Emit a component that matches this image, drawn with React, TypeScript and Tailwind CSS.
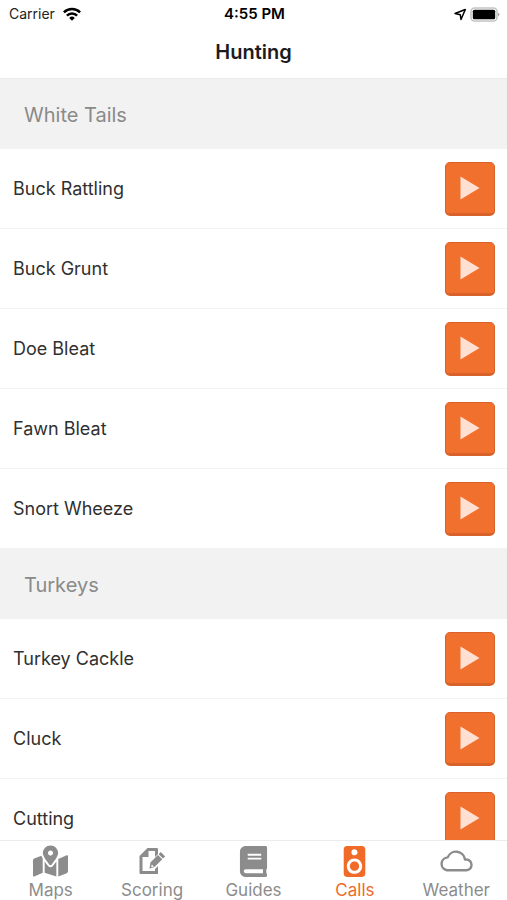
import { useState } from 'react';
import { FaBook, FaMapMarkedAlt } from 'react-icons/fa';
import { MdSpeaker } from 'react-icons/md';

const sections = [
  {
    title: 'White Tails',
    calls: ['Buck Rattling', 'Buck Grunt', 'Doe Bleat', 'Fawn Bleat', 'Snort Wheeze'],
  },
  {
    title: 'Turkeys',
    calls: ['Turkey Cackle', 'Cluck', 'Cutting'],
  },
];

function PageEditIcon() {
  return (
    <svg viewBox="0 0 28 28" className="h-7 w-7" fill="currentColor" aria-hidden="true">
      <path
        fillRule="evenodd"
        d="M9.500 1H19Q20 1 20 2V7L17 10V4H10.500V10H4.500V24H17V22L20 19V27H2.500Q1.500 27 1.500 26V9Z"
      />
      <path d="M22.800 5L27.200 9.400L25 11.600L20.600 7.200ZM19.900 7.900L24.300 12.300L16.800 19.800L11.500 21.800L12.400 15.400Z" />
      <path d="M13.800 17.600L15.800 19.600L13.200 20.300Z" fill="white" />
    </svg>
  );
}

function CloudIcon() {
  return (
    <svg viewBox="0 0 34 22" className="h-[22px] w-[34px]" fill="none" stroke="currentColor" strokeWidth="2.400" strokeLinejoin="round" aria-hidden="true">
      <path d="M8 20.300H27A5.400 5.400 0 0 0 27.300 9.500Q26.700 9.400 26 9.500A9 9 0 0 0 8.700 7.400A6.500 6.500 0 0 0 8 20.300Z" />
    </svg>
  );
}

function StatusBar() {
  return (
    <div className="grid h-7 grid-cols-3 items-center pr-[7px] pl-[9px] text-[#222]">
      <div className="flex items-center gap-2 text-sm">
        <span>Carrier</span>
        <svg viewBox="0 0 18 14" className="h-3.5 w-[18px]" fill="none" stroke="black" strokeWidth="2.500" aria-hidden="true">
          <path d="M0.900 5.300A11.400 11.400 0 0 1 17.100 5.300" />
          <path d="M3.900 8.600A7.100 7.100 0 0 1 14.100 8.600" />
          <path d="M9 13.700L6.200 10.900A4 4 0 0 1 11.800 10.900Z" fill="black" stroke="none" />
        </svg>
      </div>
      <span className="text-center text-[15px] font-semibold text-black">4:55 PM</span>
      <div className="flex items-center justify-end gap-[3px]">
        <svg viewBox="0 0 13 13" className="h-[13px] w-[13px]" fill="none" stroke="black" strokeWidth="1.500" strokeLinejoin="round" aria-hidden="true">
          <path d="M1 5.500L11.300 1.500L7 11.500L6.300 6.800Z" />
        </svg>
        <svg viewBox="0 0 30 15" className="h-[15px] w-[30px]" aria-hidden="true">
          <rect x="1" y="1" width="26" height="13" rx="3.500" fill="white" stroke="#c4c4c4" strokeWidth="1.600" />
          <rect x="2.800" y="2.800" width="22.400" height="9.400" rx="1.500" fill="black" />
          <path d="M28 5.500Q31 7.500 28 9.500Z" fill="#aaa" />
        </svg>
      </div>
    </div>
  );
}

const tabs = [
  { label: 'Maps', icon: <FaMapMarkedAlt className="h-[34px] w-[35px]" /> },
  { label: 'Scoring', icon: <PageEditIcon /> },
  { label: 'Guides', icon: <FaBook className="h-[31px] w-[31px]" /> },
  { label: 'Calls', icon: <MdSpeaker className="h-[37px] w-[37px]" /> },
  { label: 'Weather', icon: <CloudIcon /> },
];

export default function App() {
  const [activeTab, setActiveTab] = useState('Calls');

  return (
    <div className="flex h-screen flex-col bg-white font-[Inter,sans-serif]">
      <header className="shrink-0 border-b border-[#eaeaea]">
        <StatusBar />
        <h1 className="h-[50px] text-center text-xl leading-[48px] font-semibold text-[#1c1c1e]">Hunting</h1>
      </header>

      <main className="min-h-0 flex-1 overflow-y-auto [scrollbar-width:none]">
        {sections.map((section) => (
          <section key={section.title}>
            <h2 className="flex h-[70px] items-center bg-[#f2f2f2] px-6 pt-0.5 text-xl text-[#8a8a8a]">
              {section.title}
            </h2>
            <ul>
              {section.calls.map((call) => (
                <li
                  key={call}
                  className="flex h-20 items-center justify-between border-b border-[#f3f3f3] pr-3 pl-[13px]"
                >
                  <span className="text-lg text-[#303030]">{call}</span>
                  <button
                    aria-label={`Play ${call}`}
                    className="flex h-[54px] w-[50px] items-center justify-center rounded-[5px] border border-b-[3px] border-[#d9622a] bg-[#f2702d]"
                  >
                    <svg viewBox="0 0 20 24" className="h-6 w-5" fill="#ffe0d2" aria-hidden="true">
                      <path d="M0.500 0.500L19.500 12L0.500 23.500Z" />
                    </svg>
                  </button>
                </li>
              ))}
            </ul>
          </section>
        ))}
      </main>

      <nav className="grid h-[60px] shrink-0 grid-cols-5 border-t border-[#ececec] bg-white">
        {tabs.map((tab) => (
          <button
            key={tab.label}
            onClick={() => setActiveTab(tab.label)}
            className={`flex flex-col items-center text-[17px] leading-[18px] ${
              activeTab === tab.label ? 'text-[#f06a28]' : 'text-[#8c8c8c]'
            }`}
          >
            <span className="flex h-10 items-center justify-center">{tab.icon}</span>
            {tab.label}
          </button>
        ))}
      </nav>
    </div>
  );
}
